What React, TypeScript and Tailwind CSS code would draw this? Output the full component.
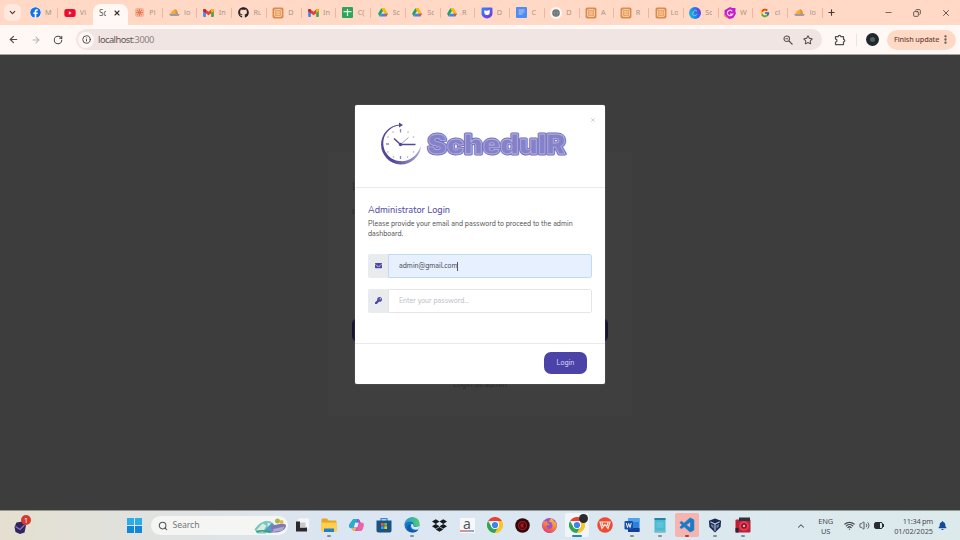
import React from "react";
import { FaFacebook, FaYoutube, FaGithub, FaEnvelope, FaKey, FaDropbox, FaBell, FaFirefoxBrowser } from "react-icons/fa";
import { FcGoogle } from "react-icons/fc";
import { VscVscode } from "react-icons/vsc";
import {
  ArrowLeft, ArrowRight, RotateCw, Info, Star, EllipsisVertical, ChevronDown, ChevronUp,
  X, Plus, Minus, Copy, Search, Wifi, Volume2,
} from "lucide-react";

const Gmail = () => (
  <svg viewBox="0 0 24 18" className="w-[11px] h-[8px]">
    <path d="M0 3v13a2 2 0 0 0 2 2h4V7z" fill="#4285f4" />
    <path d="M24 3v13a2 2 0 0 1-2 2h-4V7z" fill="#34a853" />
    <path d="M0 2.500C0 0 3-1 5 .7L12 6 19 .7C21-1 24 0 24 2.500V5L12 14 0 5z" fill="#e24335" />
    <path d="M0 2.500V5l6 4V1.400L5 .7C3-1 0 0 0 2.500z" fill="#b92b28" />
    <path d="M24 2.500V5l-6 4V1.400l1-.7C21-1 24 0 24 2.500z" fill="#fbbc04" />
  </svg>
);

const Drive = () => (
  <svg viewBox="0 0 24 22" className="w-[10px] h-[9px]">
    <path d="M8 0 0 14l4 7 8-14z" fill="#1ea362" />
    <path d="M8 0h8l8 14h-8z" fill="#fbbc04" />
    <path d="M4 21h16l4-7H8z" fill="#4285f4" />
    <path d="M20 21l4-7h-8z" fill="#e2503e" />
  </svg>
);

const Sheets = () => (
  <svg viewBox="0 0 22 22" className="w-[11px] h-[11px]">
    <rect width="22" height="22" rx="2" fill="#2ea558" />
    <path d="M3 9h16M11 4v14" stroke="#f2fff6" strokeWidth="2.500" fill="none" opacity=".9" />
  </svg>
);

const Docs = () => (
  <svg viewBox="0 0 22 22" className="w-[11px] h-[11px]">
    <rect width="22" height="22" rx="2" fill="#4f8bf0" />
    <path d="M5 6h12M5 10h12M5 14h8" stroke="#b5d0fb" strokeWidth="2" />
  </svg>
);

const OrangeBox = () => (
  <svg viewBox="0 0 22 22" className="w-[12px] h-[12px]">
    <rect x="1" y="1" width="20" height="20" rx="3" fill="#d98a4c" />
    <rect x="4.500" y="4.500" width="13" height="13" rx="2" fill="#e9a76f" stroke="#fcd3ad" strokeWidth="1.500" />
    <path d="M8 9c2-2 3 2 6 0M8 13c2-2 3 2 6 0" stroke="#ffe1bd" strokeWidth="1.600" fill="none" />
  </svg>
);

const Sailboat = () => (
  <svg viewBox="0 0 22 18" className="w-[11px] h-[9px]">
    <path d="M2 12C5 8 7 3 10 4c3-5 7 1 7 8z" fill="#f3ac3c" />
    <path d="M13 12V2c3 2 5 6 5 10z" fill="#e58b3a" />
    <path d="M0 12h22l-3 4H3z" fill="#9d9aa9" />
  </svg>
);

const Burst = () => (
  <svg viewBox="0 0 22 22" className="w-[11px] h-[11px]">
    <rect x="2" y="2" width="18" height="18" rx="5" fill="#f6b293" />
    <path d="M11 4v14M4 11h14M6 6l10 10M16 6 6 16" stroke="#e07b58" strokeWidth="1.800" />
  </svg>
);

const Messenger = () => (
  <svg viewBox="0 0 22 22" className="w-[12px] h-[12px]">
    <defs>
      <linearGradient id="msg" x1="0" y1="0" x2="1" y2="1">
        <stop offset="0" stopColor="#2b8cf5" /><stop offset="1" stopColor="#8128e8" />
      </linearGradient>
    </defs>
    <path d="M3 1h16c1 0 2 1 2 2v9c0 5-5 9-10 9S1 17 1 12V3c0-1 1-2 2-2z" fill="url(#msg)" />
    <path d="M6 6c3 1 6 1 10-1v5c0 6-9 7-10 0z" fill="#fff" />
  </svg>
);

const Globe = () => (
  <svg viewBox="0 0 22 22" className="w-[12px] h-[12px]">
    <circle cx="11" cy="11" r="11" fill="#fff4ee" />
    <circle cx="11" cy="11" r="7" fill="#6c7779" />
    <path d="M4 11h14M11 4c-4 4-4 10 0 14 4-4 4-10 0-14" stroke="#8f9b9c" fill="none" />
  </svg>
);

const Canva = () => (
  <svg viewBox="0 0 22 22" className="w-[12px] h-[12px]">
    <defs>
      <linearGradient id="cnv" x1="0" y1="0.600" x2="1" y2="0.300">
        <stop offset="0" stopColor="#12bcd4" /><stop offset="0.500" stopColor="#1f80ea" /><stop offset="1" stopColor="#7a2de2" />
      </linearGradient>
    </defs>
    <circle cx="11" cy="11" r="11" fill="url(#cnv)" />
    <path d="M14 8c0-4-6-2-7 3-1 6 5 6 8 2" stroke="#8fd0f6" strokeWidth="1.700" fill="none" />
  </svg>
);

const PinkSwirl = () => (
  <svg viewBox="0 0 22 22" className="w-[12px] h-[12px]">
    <path d="M11 0l4 2h6v7l1 3-5 8-7 2-9-5V6z" fill="#c21ed0" />
    <path d="M15 8c-2-4-9-2-9 3s7 7 10 2h-5" stroke="#ffc9f4" strokeWidth="2.200" fill="none" />
    <path d="M1 13l1 5 7 3z" fill="#f18a31" />
  </svg>
);

const ZoomOut = () => (
  <svg viewBox="0 0 20 20" className="ml-auto h-[10px] w-[10px]" fill="none" stroke="#5a5351" strokeWidth="2.200">
    <circle cx="7.500" cy="7.500" r="5.500" /><path d="M12 12l7 7M5 7.500h5" />
  </svg>
);

const Extension = () => (
  <svg viewBox="0 0 24 24" className="ml-[12px] h-[12px] w-[12px]" fill="none" stroke="#56504e" strokeWidth="2.500" strokeLinejoin="round">
    <path d="M3 5h5.500a2.500 2.500 0 0 1 5 0H19v5.500a2.500 2.500 0 0 1 0 5V21H3v-5c4 0 4-6 0-6z" />
  </svg>
);

const Chrome = () => (
  <svg viewBox="0 0 32 32" className="w-[16px] h-[16px]">
    <path d="M2.100 8A16 16 0 0 1 29.900 8H16z" fill="#e94234" />
    <path d="M2.100 8A16 16 0 0 0 16 32l7-12-14 0z" fill="#2fa650" />
    <path d="M29.900 8A16 16 0 0 1 16 32l7-12 0-12z" fill="#fcc521" />
    <circle cx="16" cy="16" r="8" fill="#fff" />
    <circle cx="16" cy="16" r="6.200" fill="#3f83ee" />
  </svg>
);

const Folder = () => (
  <svg viewBox="0 0 32 30" className="w-[16px] h-[15px]">
    <path d="M1 3c0-1 1-2 2-2h9l3 4h14c1 0 2 1 2 2v19H1z" fill="#e9a520" />
    <path d="M1 9h30v17c0 1-1 2-2 2H3c-1 0-2-1-2-2z" fill="#ffd04d" />
    <path d="M6 21h20v7H6z" fill="#2180c9" />
  </svg>
);

const Copilot = () => (
  <svg viewBox="0 0 32 30" className="w-[15px] h-[14px]">
    <path d="M9 2h10c3 0 4 5 6 8H13L9 22H5c-5 0-6-4-4-9z" fill="#2388e8" />
    <path d="M9 2h9l-4 8-4 12H5c-4 0-5-4-4-8z" fill="#25b2c4" />
    <path d="M19 2c4 0 4 6 6 8h3c5 0 3 9 1 13-1 4-4 5-6 5H11c-4 0-4-6-5-8h10z" fill="#ba4edb" />
    <path d="M23 10h5c5 0 3 9 1 13-1 4-4 5-6 5h-7z" fill="#ef649f" />
    <path d="M6 21h10l-3 7h-2c-3 0-4-4-5-7z" fill="#f6b542" />
    <path d="M13 10h8l-3 10h-7z" fill="#e9eff7" />
  </svg>
);

const Store = () => (
  <svg viewBox="0 0 32 32" className="w-[16px] h-[16px]">
    <path d="M10 8V3h12v5" fill="none" stroke="#2c92dc" strokeWidth="2.500" />
    <path d="M1 7h30v20c0 2-1 4-4 4H5c-3 0-4-2-4-4z" fill="#1a5382" />
    <path d="M10 12h5.500v5.500H10z" fill="#e75a37" /><path d="M16.500 12H22v5.500h-5.500z" fill="#7eb832" />
    <path d="M10 18.500h5.500V24H10z" fill="#27a3e8" /><path d="M16.500 18.500H22V24h-5.500z" fill="#f6be32" />
  </svg>
);

const Edge = () => (
  <svg viewBox="0 0 32 32" className="w-[16px] h-[16px]">
    <defs>
      <linearGradient id="edg" x1="0" y1="0" x2="1" y2="0">
        <stop offset="0" stopColor="#239dd9" /><stop offset="1" stopColor="#52cf68" />
      </linearGradient>
    </defs>
    <circle cx="16" cy="16" r="15" fill="#1576c9" />
    <path d="M1 15C3-4 31-4 31 13c0 7-10 8-12 4 3-8-10-12-18-2z" fill="url(#edg)" />
    <path d="M13 15c-4 8 5 16 16 10-3 5-10 7-16 5C3 26 5 15 13 15z" fill="#1457a5" />
    <path d="M15 14c5-1 2 5 7 6 5 1 9-3 9-3l-2 7c-7 4-18-1-14-10z" fill="#dce9f5" />
  </svg>
);

const TaskView = () => (
  <svg viewBox="0 0 28 28" className="w-[14px] h-[14px]">
    <rect x="6" y="1" width="22" height="20" rx="2" fill="#f5f7f9" />
    <path d="M2 7h8v12h14v8H2z" fill="#2a2a2c" />
    <path d="M10 9h11v10H10z" fill="#c7c8cb" />
  </svg>
);

const RedCircle = () => (
  <svg viewBox="0 0 30 30" className="w-[15px] h-[15px]">
    <circle cx="15" cy="15" r="14.500" fill="#35070b" />
    <circle cx="15" cy="15" r="8" fill="none" stroke="#9c1a25" strokeWidth="2.500" />
    <path d="M11 11h8l-3 4 3 4h-8z" fill="#a81924" />
  </svg>
);

const Firefox = () => (
  <span className="flex h-[15px] w-[15px] items-center justify-center rounded-full bg-[#9a55c9]">
    <svg width="0" height="0" className="absolute">
      <linearGradient id="ffx" x1="0.800" y1="0" x2="0.300" y2="1">
        <stop offset="0" stopColor="#ffc83a" /><stop offset="0.500" stopColor="#fb8638" /><stop offset="1" stopColor="#ee3b67" />
      </linearGradient>
    </svg>
    <FaFirefoxBrowser size={15} fill="url(#ffx)" />
  </span>
);

const Wps = () => (
  <svg viewBox="0 0 32 32" className="w-[16px] h-[16px]">
    <circle cx="16" cy="16" r="15.500" fill="#ef4b32" />
    <path d="M6 10h20l-4 13-6-8-6 8zM10 11l2 7M22 11l-2 7" stroke="#ffe6df" strokeWidth="2.400" fill="none" />
  </svg>
);

const Word = () => (
  <svg viewBox="0 0 32 32" className="w-[16px] h-[16px]">
    <rect x="8" y="2" width="23" height="28" rx="2" fill="#2f80d8" />
    <path d="M8 2h23v8H8z" fill="#4da4ee" /><path d="M8 22h23v8H8z" fill="#153e96" />
    <rect x="1" y="8" width="17" height="17" rx="2" fill="#174fae" />
    <path d="M4.500 12l2.500 9 2.500-8 2.500 8 2.500-9" stroke="#fff" strokeWidth="1.800" fill="none" />
  </svg>
);

const Notepad = () => (
  <svg viewBox="0 0 24 32" className="w-[12px] h-[16px]">
    <rect x="1" y="2" width="22" height="29" rx="2" fill="#4bb9d2" />
    <path d="M1 2h22v4H1z" fill="#2584a6" />
    <path d="M5 12h14M5 16h14M5 20h14" stroke="#77d5e5" strokeWidth="1.500" />
    <path d="M1 27h22v4H1z" fill="#7cb9ca" />
  </svg>
);

const Cube = () => (
  <svg viewBox="0 0 30 32" className="w-[14px] h-[15px]">
    <path d="M2 6l13-5 13 5-1 13-12 12L3 19z" fill="#19294f" />
    <path d="M5 8l10 5 10-5M15 13v14" stroke="#b8c5dd" strokeWidth="2.500" fill="none" />
    <path d="M6 13l6 3v7l-5-5zM24 13l-6 3v7l5-5z" fill="#71829f" />
  </svg>
);

const RedCamera = () => (
  <svg viewBox="0 0 32 32" className="w-[16px] h-[16px]">
    <rect x="1" y="5" width="30" height="26" rx="2" fill="#bd1f36" />
    <path d="M8 1h22v7H8z" fill="#30333c" />
    <circle cx="18" cy="18" r="10" fill="#e63850" />
    <circle cx="18" cy="18" r="5.500" fill="#7b1426" /><circle cx="18" cy="18" r="2.500" fill="#f1a4af" />
    <path d="M1 22h6v9H1z" fill="#252832" />
  </svg>
);

const SearchArt = () => (
  <svg viewBox="0 0 64 32" className="w-[33px] h-[16px]">
    <path d="M0 23C10 7 24 3 34 8l4 15-16 8H6z" fill="#75c7bf" />
    <path d="M4 24l12-13 8 4-8 14zM26 9l9 3-8 12z" fill="#d6eee2" />
    <path d="M20 25l15-16 11 11-12 10z" fill="#5799c2" />
    <path d="M33 16c13-4 25-7 30-2 0 9-9 16-28 15z" fill="#7e79b4" />
    <path d="M38 22l22-5-4 8-20 3z" fill="#b2a8d1" />
    <circle cx="46" cy="6" r="5" fill="#a4bb43" /><circle cx="54" cy="8" r="4" fill="#e6b843" />
    <path d="M4 28c10-5 20-2 28 1" stroke="#3a9a78" strokeWidth="3" fill="none" />
  </svg>
);

const ProfileChrome = () => (
  <span className="relative flex">
    <Chrome />
    <span className="absolute -right-[3px] -top-[3px] h-[9px] w-[9px] rounded-full bg-[#292c2e]" />
  </span>
);

const ClockLogo = () => (
  <svg viewBox="0 0 46 46" className="h-[46px] w-[46px] shrink-0">
    <defs>
      <linearGradient id="rim" x1="0" y1="0.500" x2="1" y2="0.500">
        <stop offset="0.300" stopColor="#51479f" /><stop offset="1" stopColor="#aaa6d0" />
      </linearGradient>
    </defs>
    <path d="M22 3.500A20 20 0 1 0 43 25C39 36 30 41 21.500 40A17.800 17.800 0 0 1 22 4.500z" fill="url(#rim)" />
    <path d="M21 1.500l4 2.500-4 2.500z" fill="#51479f" />
    <g stroke="#8a86bb" strokeWidth="1.300">
      <path d="M22.500 8v3.500M22.500 35v3M8 23h3" />
    </g>
    <g fill="#aaa8cc">
      <circle cx="15" cy="11" r=".8" /><circle cx="30" cy="11" r=".8" /><circle cx="10" cy="16" r=".8" />
      <circle cx="35.500" cy="16" r=".8" /><circle cx="10" cy="31" r=".8" /><circle cx="15.500" cy="36" r=".8" />
      <circle cx="29.500" cy="36" r=".8" /><circle cx="35.500" cy="31" r=".8" />
    </g>
    <path d="M22.500 23.500L16 17.500M22.500 23.500h15" stroke="#514a99" strokeWidth="1.600" />
    <path d="M22.500 23.500l8-7" stroke="#a09dc7" />
    <circle cx="22.500" cy="23.500" r="1.700" fill="#514a99" />
  </svg>
);

const BrandText = () => (
  <svg viewBox="0 0 144 30" className="h-[30px] w-[144px] shrink-0" fontFamily="Inter, 'Liberation Sans', sans-serif" fontWeight="900" fontSize="27">
    <text x="3.500" y="24.500" textLength="138" lengthAdjust="spacingAndGlyphs" fill="#706bbd" stroke="#716cbe" strokeWidth="2.800" strokeLinejoin="round">SchedulR</text>
    <text x="3.500" y="24.500" textLength="138" lengthAdjust="spacingAndGlyphs" fill="#8581c9" stroke="#b3b1e0" strokeWidth=".8">SchedulR</text>
  </svg>
);

const tabs: { icon: React.ReactNode; label: string }[] = [
  { icon: <FaFacebook size={11} color="#1270e8" className="rounded-full bg-white" />, label: "M" },
  { icon: <FaYoutube size={12} color="#ee0b31" />, label: "Vi" },
  { icon: null, label: "Sc" },
  { icon: <Burst />, label: "Pi" },
  { icon: <Sailboat />, label: "lo" },
  { icon: <Gmail />, label: "In" },
  { icon: <FaGithub size={11} color="#24252a" />, label: "Ru" },
  { icon: <OrangeBox />, label: "D" },
  { icon: <Gmail />, label: "In" },
  { icon: <Sheets />, label: "C(" },
  { icon: <Drive />, label: "Sc" },
  { icon: <Drive />, label: "Sc" },
  { icon: <Drive />, label: "R" },
  { icon: <Messenger />, label: "D" },
  { icon: <Docs />, label: "C" },
  { icon: <Globe />, label: "D" },
  { icon: <OrangeBox />, label: "A" },
  { icon: <OrangeBox />, label: "R" },
  { icon: <OrangeBox />, label: "Lo" },
  { icon: <Canva />, label: "Sc" },
  { icon: <PinkSwirl />, label: "W" },
  { icon: <FcGoogle size={10} />, label: "cl" },
  { icon: <Sailboat />, label: "lo" },
];

const apps: { icon: React.ReactNode; mark?: "dot" | "bar" | "red"; box?: string }[] = [
  { icon: <TaskView /> },
  { icon: <Folder />, mark: "dot" },
  { icon: <Copilot /> },
  { icon: <Store /> },
  { icon: <Edge />, mark: "dot" },
  { icon: <FaDropbox size={15} color="#17191c" /> },
  { icon: <span className="flex h-[15px] w-[15px] flex-col items-center justify-center bg-[#f8f8f8] text-[14px] leading-[10px] text-[#55585b]">a<span className="mt-[1px] h-[2px] w-[14px] bg-gradient-to-r from-[#e88c7c] to-[#7fa9dc]" /></span> },
  { icon: <Chrome /> },
  { icon: <RedCircle /> },
  { icon: <Firefox /> },
  { icon: <ProfileChrome />, mark: "bar", box: "bg-[#f1f5fa]" },
  { icon: <Wps /> },
  { icon: <Word />, mark: "dot" },
  { icon: <Notepad />, mark: "dot" },
  { icon: <VscVscode size={17} color="#167bc9" stroke="#167bc9" strokeWidth={0.6} />, mark: "red", box: "bg-[#f4b5b1]" },
  { icon: <Cube />, mark: "dot" },
  { icon: <RedCamera />, mark: "dot" },
];

const marks = {
  dot: "h-[2px] w-[4px] bg-[#878d95]",
  bar: "h-[2px] w-[10px] bg-[#2785c4]",
  red: "h-[2px] w-[4px] bg-[#c83232]",
};

function BrowserChrome() {
  return (
    <header className="h-[55px] border-b border-[#aaa4a1] bg-[#fff8f5]">
      <div className="flex h-[25px] bg-[#ffd9c6]">
        <div className="flex w-[23.500px] shrink-0 items-center pl-1">
          <span className="flex h-[17px] w-[17px] items-center justify-center rounded-md bg-[#ffe9df]">
            <ChevronDown size={9} strokeWidth={3} color="#453a35" />
          </span>
        </div>
        {tabs.map((t, i) =>
          i === 2 ? (
            <div key={i} className="mt-1 flex w-[34.750px] shrink-0 items-center justify-between rounded-t-lg bg-[#fff8f5] pr-[7px] pb-[3px] pl-[6px] text-[8px] text-[#5c5551]">
              <span className="w-[7px] overflow-hidden">{t.label}</span>
              <X size={8} strokeWidth={3.500} color="#3d3633" />
            </div>
          ) : (
            <div key={i} className="flex w-[34.750px] shrink-0 items-center pl-[5.500px]">
              <span className="flex w-3 shrink-0 justify-center">{t.icon}</span>
              <span className="ml-[4px] w-[7px] overflow-hidden text-[7.300px] whitespace-nowrap text-[#ad9285]">{t.label}</span>
              {i !== 1 && <span className="ml-auto h-[10px] w-px bg-[#f0b69d]" />}
            </div>
          ),
        )}
        <div className="flex grow items-center pl-1"><Plus size={9} strokeWidth={3} color="#433935" /></div>
        <div className="flex items-center gap-[20px] pr-[9px] text-[#4c403a]">
          <Minus size={9} strokeWidth={2} />
          <Copy size={8} strokeWidth={2.500} className="-scale-x-100" />
          <X size={10} strokeWidth={2} />
        </div>
      </div>
      <div className="flex h-[29px] items-center">
        <div className="flex w-[76px] items-center gap-[12px] pl-[8px]">
          <ArrowLeft size={11} strokeWidth={2.500} color="#514a47" />
          <ArrowRight size={10} strokeWidth={2.500} color="#b7afac" />
          <RotateCw size={10} strokeWidth={2.500} color="#514a47" />
        </div>
        <div className="flex h-[21px] w-[746px] items-center rounded-full bg-[#f1e5e3] pr-[9px] pl-[2px]">
          <span className="flex h-[16px] w-[16px] items-center justify-center rounded-full bg-[#fdf6f4]">
            <Info size={9} strokeWidth={2.500} color="#4a4442" />
          </span>
          <span className="mt-px ml-[4px] text-[9.300px] tracking-[-0.520px] text-[#5d5654]">localhost<span className="text-[#8b8280]">:3000</span></span>
          <ZoomOut />
          <Star size={10} strokeWidth={2.500} color="#5a5351" className="ml-[10.500px]" />
        </div>
        <Extension />
        <span className="ml-[10px] h-[12px] w-px bg-[#f3e0d8]" />
        <span className="ml-[9px] flex h-[13px] w-[13px] items-center justify-center rounded-full bg-[#202829]">
          <span className="h-[5px] w-[5px] rounded-full bg-[#4e6063]" />
        </span>
        <div className="ml-[8px] flex h-[20px] w-[69px] items-center rounded-full bg-[#ffd9c6] pl-[7px] text-[7.300px] font-medium tracking-[-0.150px] whitespace-nowrap text-[#6a4a3c]">
          Finish update
          <EllipsisVertical size={11} strokeWidth={3} className="mr-[5px] ml-auto shrink-0" />
        </div>
      </div>
    </header>
  );
}

function LoginModal() {
  return (
    <div className="absolute inset-0 flex items-start justify-center pt-[49.500px]">
      <div className="flex h-[279.500px] w-[250px] flex-col rounded-[2px] bg-white font-[Nunito,'Noto_Sans',sans-serif] shadow-[0_0_1px_#aaa]">
        <div className="flex h-[83px] shrink-0 items-start border-b border-[#e9e9eb] pl-[23px]">
          <div className="flex items-center pt-[16px]">
            <ClockLogo />
            <BrandText />
          </div>
          <X size={6} strokeWidth={2.500} color="#b5b5b9" className="mt-[12px] ml-[22px] shrink-0" />
        </div>
        <div className="h-[156px] shrink-0 border-b border-[#e9e9eb] px-[13px] pt-[17px]">
          <h1 className="text-[9.150px] leading-[11px] font-medium text-[#58529f]">Administrator Login</h1>
          <p className="mt-[3px] text-[7.050px] leading-[10px] whitespace-nowrap text-[#505050]">
            Please provide your email and password to proceed to the admin<br />dashboard.
          </p>
          <div className="mt-[15px] flex h-[24px] overflow-hidden rounded-[2px]">
            <span className="flex w-[20px] items-center justify-center bg-[#e9ecef]"><FaEnvelope size={7} color="#5147a4" /></span>
            <div className="flex grow items-center rounded-r-[2px] border border-[#c3d9ef] bg-[#e7f0fe] pt-px pl-[10px] text-[7.050px] text-[#454850]">
              admin@gmail.com<span className="h-[9px] w-px bg-[#555]" />
            </div>
          </div>
          <div className="mt-[11px] flex h-[24px] overflow-hidden rounded-[2px]">
            <span className="flex w-[20px] items-center justify-center bg-[#e9ecef]"><FaKey size={7} color="#5147a4" /></span>
            <div className="flex grow items-center rounded-r-[2px] border border-[#e5e5e8] pt-px pl-[10px] text-[7.050px] text-[#bcbdc3]">Enter your password...</div>
          </div>
        </div>
        <div className="flex grow items-center justify-end pr-[18px] pb-px">
          <button className="h-[22px] w-[43px] rounded-[7px] bg-[#4c43a8] text-[7.200px] text-[#dddaf4]">Login</button>
        </div>
      </div>
    </div>
  );
}

function Taskbar() {
  return (
    <footer className="flex h-[30px] items-center border-t border-[#969696] bg-gradient-to-r from-[#e4dfd0] via-[#dbe6f3] via-35% to-[#dceaec] text-[#4b4e53]">
      <div className="flex w-[126.500px] shrink-0 pl-[14px]">
        <span className="relative flex h-[17px] w-[17px] items-end">
          <svg viewBox="0 0 26 28" className="h-[14px] w-[13px]">
            <path d="M5 5l12-2 7 8-3 14-9 3-9-4-2-10z" fill="#33235e" />
            <path d="M3 13l9 6 9-9" stroke="#8b78b6" strokeWidth="2.500" fill="none" />
          </svg>
          <span className="absolute -top-[2px] right-0 flex h-[10px] w-[10px] items-center justify-center rounded-full bg-[#d33a2d] text-[7px] leading-none text-white">1</span>
        </span>
      </div>
      <svg viewBox="0 0 30 30" className="h-[15px] w-[15px] shrink-0">
        <path d="M0 0h14v14H0zM16 0h14v14H16z" fill="#29aee9" /><path d="M0 16h14v14H0zM16 16h14v14H16z" fill="#1288d4" />
      </svg>
      <div className="ml-[9px] flex h-[19px] w-[137px] shrink-0 items-center rounded-full bg-[#f5f6f4] pl-[7px]">
        <Search size={10} strokeWidth={2.500} color="#4f5356" />
        <span className="ml-[5px] text-[8.700px] tracking-[-0.100px] text-[#747779]">Search</span>
        <span className="ml-auto pr-px"><SearchArt /></span>
      </div>
      <div className="ml-[0.500px] flex h-full shrink-0">
        {apps.map((a, i) => (
          <div key={i} className="flex w-[27.550px] flex-col items-center pt-[2px]">
            <div className={`flex h-[24px] w-[24px] items-center justify-center rounded-[2px] ${a.box ?? ""}`}>{a.icon}</div>
            {a.mark && <span className={`-mt-[2px] rounded-full ${marks[a.mark]}`} />}
          </div>
        ))}
      </div>
      <div className="ml-auto flex shrink-0 items-center pr-[13px]">
        <ChevronUp size={10} strokeWidth={2.500} />
        <div className="ml-[12px] text-center text-[7.500px] leading-[10px] tracking-[-0.200px]">ENG<br />US</div>
        <Wifi size={11} strokeWidth={2.800} className="ml-[11px]" />
        <Volume2 size={11} strokeWidth={2} className="ml-[4px]" />
        <span className="ml-[4px] flex h-[7px] w-[9px] rounded-[2px] border border-[#292c31] pr-[2px]"><span className="grow bg-[#292c31]" /></span>
        <span className="h-[3px] w-px bg-[#292c31]" />
        <div className="ml-[8px] w-[41px] text-right text-[7.400px] leading-[10px] tracking-[-0.050px] whitespace-nowrap"><div className="tracking-[-0.250px]">11:34 pm</div><div>01/02/2025</div></div>
        <FaBell size={9} color="#134a99" className="ml-[5px]" />
      </div>
    </footer>
  );
}

export default function App() {
  return (
    <div className="flex h-[540px] w-[960px] flex-col overflow-hidden font-['Noto_Sans','Open_Sans',sans-serif]">
      <BrowserChrome />
      <main className="relative flex grow items-start justify-center bg-[#3d3d3e] pt-[97px]">
        <section className="flex h-[264px] w-[304px] flex-col bg-[#3f3f3f] px-[24px] text-[#29292b]">
          <div className="mt-[28px] text-[10px] leading-3">Login</div>
          <div className="mt-[16px] text-[7px] leading-2">Email</div>
          <div className="mt-[102px] h-[24px] shrink-0 rounded-[6px] bg-[#17132f]" />
          <div className="mt-[38px] text-center text-[7.500px] leading-[9px]">Login as admin</div>
        </section>
        <LoginModal />
      </main>
      <Taskbar />
    </div>
  );
}
